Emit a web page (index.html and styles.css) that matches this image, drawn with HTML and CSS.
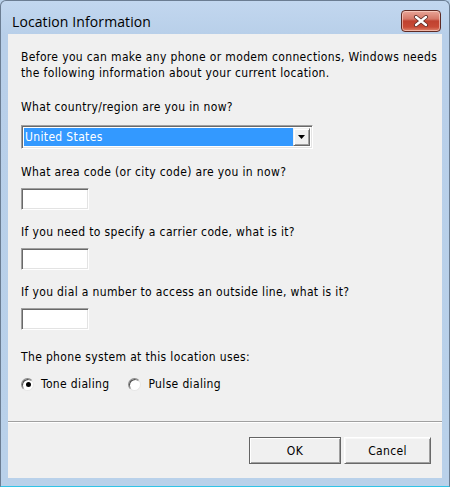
FILE: index.html
```html
<!DOCTYPE html>
<html>
<head>
<meta charset="utf-8">
<link rel="stylesheet" href="styles.css">
</head>
<body>
<div class="window">
  <div class="titlebar">
    <span class="title">Location Information</span>
    <button class="close" aria-label="Close">
      <svg width="16" height="12" viewBox="0 0 16 12">
        <path d="M3 2 L13 10 M13 2 L3 10" stroke="#5a2a24" stroke-width="4" stroke-linecap="round" fill="none"/>
        <path d="M3 2 L13 10 M13 2 L3 10" stroke="#ffffff" stroke-width="2.4" stroke-linecap="round" fill="none"/>
      </svg>
    </button>
  </div>
  <div class="client">
    <p class="intro">Before you can make any phone or modem connections, Windows needs the following information about your current location.</p>
    <div class="label l-country">What country/region are you in now?</div>
    <div class="combo">
      <div class="combo-value">United States</div>
      <div class="combo-btn">
        <svg width="7" height="4" viewBox="0 0 7 4"><path d="M0 0 H7 L3.5 4 Z" fill="#000"/></svg>
      </div>
    </div>
    <div class="label l-field l-first">What area code (or city code) are you in now?</div>
    <div class="textbox"></div>
    <div class="label l-field">If you need to specify a carrier code, what is it?</div>
    <div class="textbox"></div>
    <div class="label l-field">If you dial a number to access an outside line, what is it?</div>
    <div class="textbox"></div>
    <div class="label l-phone">The phone system at this location uses:</div>
    <div class="radios">
      <div class="opt"><span class="radio checked"></span><span>Tone dialing</span></div>
      <div class="opt"><span class="radio"></span><span>Pulse dialing</span></div>
    </div>
    <div class="separator"></div>
    <div class="buttons">
      <button class="btn btn-default">OK</button>
      <button class="btn btn-cancel">Cancel</button>
    </div>
  </div>
</div>
</body>
</html>
```

FILE: styles.css
```css
html, body {
  margin: 0;
  padding: 0;
}
body {
  width: 450px;
  height: 487px;
  overflow: hidden;
  background: #b9d1ea;
}
.window {
  box-sizing: border-box;
  width: 450px;
  height: 487px;
  display: flex;
  flex-direction: column;
  background: linear-gradient(#c2d7ef 0px, #b8cfe9 34px, #b9d1ea 100%);
  border: 1px solid #6b7d92;
  border-bottom: 1px solid #31c3e6;
  border-radius: 6px 6px 0 0;
}
.titlebar {
  height: 33px;
  display: flex;
  justify-content: space-between;
  align-items: flex-start;
  padding: 0 8px 0 11px;
}
.title {
  font-family: "Open Sans", "DejaVu Sans", sans-serif;
  font-size: 14px;
  letter-spacing: 0.1px;
  color: #000;
  margin-top: 11px;
  line-height: 20px;
}
.close {
  margin-top: 9px;
  width: 40px;
  height: 22px;
  padding: 0;
  border: 1px solid #5e2a24;
  border-radius: 4px;
  background: linear-gradient(#e8a598 0%, #d47868 40%, #c0412f 50%, #c84a36 80%, #e0866e 100%);
  box-shadow: inset 0 0 0 1px rgba(255, 220, 210, 0.6);
  display: flex;
  align-items: center;
  justify-content: center;
}
.client {
  flex: 1;
  margin: 0 7px 8px 7px;
  background: #f0f0f0;
  display: flex;
  flex-direction: column;
  padding: 15px 0 14px 13px;
  font-family: "DejaVu Sans Condensed", "DejaVu Sans", sans-serif;
  font-size: 12px;
  letter-spacing: 0.35px;
  line-height: 16px;
  color: #000;
}
.intro {
  margin: 0;
  padding-right: 2px;
}
.label {
  height: 16px;
  white-space: nowrap;
}
.l-country { margin-top: 18px; }
.l-first { margin-top: 15px !important; }
.l-field { margin-top: 14px; }
.l-phone { margin-top: 19px; }

.combo {
  box-sizing: border-box;
  margin-top: 10px;
  width: 292px;
  height: 24px;
  display: flex;
  border: 1px solid;
  border-color: #a0a0a0 #ffffff #ffffff #a0a0a0;
  box-shadow: inset 1px 1px 0 #696969, inset -1px -1px 0 #e3e3e3;
  padding: 2px;
  background: #fff;
}
.combo-value {
  flex: 1;
  background: #3399ff;
  color: #fff;
  line-height: 18px;
  padding-left: 1px;
}
.combo-btn {
  box-sizing: border-box;
  width: 17px;
  height: 18px;
  background: #f0f0f0;
  border: 1px solid;
  border-color: #f0f0f0 #696969 #696969 #f0f0f0;
  box-shadow: inset 1px 1px 0 #ffffff, inset -1px -1px 0 #a0a0a0;
  display: flex;
  align-items: center;
  justify-content: center;
}
.textbox {
  box-sizing: border-box;
  margin-top: 8px;
  width: 68px;
  height: 22px;
  background: #fff;
  border: 1px solid;
  border-color: #a0a0a0 #ffffff #ffffff #a0a0a0;
  box-shadow: inset 1px 1px 0 #696969, inset -1px -1px 0 #e3e3e3;
}
.radios {
  margin-top: 11px;
  display: flex;
  gap: 19px;
  height: 16px;
}
.opt {
  display: flex;
  align-items: center;
  gap: 7px;
}
.radio {
  box-sizing: border-box;
  width: 13px;
  height: 13px;
  border-radius: 50%;
  background: #fff;
  border: 1px solid;
  border-color: #8a8a8a #e6e6e6 #e6e6e6 #8a8a8a;
  box-shadow: inset 1px 1px 0 #505050;
  display: flex;
  align-items: center;
  justify-content: center;
}
.radio.checked::after {
  content: "";
  width: 5px;
  height: 5px;
  border-radius: 50%;
  background: #000;
  margin: 1px 0 0 1px;
}
.separator {
  margin-top: auto;
  margin-left: -13px;
  height: 1px;
  background: #a0a0a0;
  border-bottom: 1px solid #ffffff;
}
.buttons {
  margin-top: 14px;
  display: flex;
  justify-content: flex-end;
  gap: 3px;
  padding-right: 11px;
}
.btn {
  box-sizing: border-box;
  height: 27px;
  font-family: "DejaVu Sans Condensed", "DejaVu Sans", sans-serif;
  font-size: 12px;
  letter-spacing: 0.35px;
  color: #000;
  background: #f0f0f0;
  padding: 0;
}
.btn-default {
  width: 92px;
  border: 1px solid #646464;
  box-shadow: inset 1px 1px 0 #ffffff, inset -1px -1px 0 #a0a0a0;
}
.btn-cancel {
  width: 87px;
  border: 1px solid;
  border-color: #ffffff #696969 #696969 #ffffff;
  box-shadow: inset 1px 1px 0 #f8f8f8, inset -1px -1px 0 #a0a0a0;
}
```
